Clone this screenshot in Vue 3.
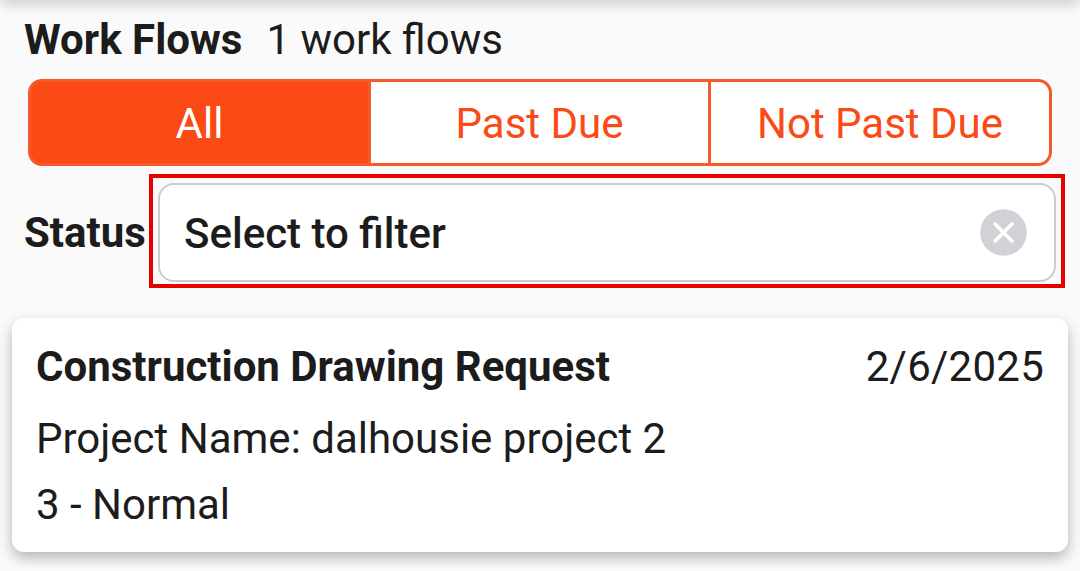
<script setup>
import { ref } from 'vue'

const tabs = ['All', 'Past Due', 'Not Past Due']
const activeTab = ref('All')
</script>

<template>
  <div class="page">
    <div class="top-shadow"></div>
    <div class="heading">
      <span class="heading-title">Work Flows</span>
      <span class="heading-count">1 work flows</span>
    </div>

    <div class="tabs">
      <button
        v-for="tab in tabs"
        :key="tab"
        type="button"
        class="tab"
        :class="{ active: tab === activeTab }"
        @click="activeTab = tab"
      >{{ tab }}</button>
    </div>

    <div class="filter-row">
      <span class="filter-label">Status</span>
      <div class="filter-box">
        <div class="filter-input">
          <span class="filter-text">Select to filter</span>
          <svg class="clear-icon" width="47" height="47" viewBox="0 0 47 47">
            <circle cx="23.5" cy="23.5" r="23.3" fill="#d1d1d6" />
            <path d="M15 15L32 32M32 15L15 32" stroke="#fff" stroke-width="3.6" stroke-linecap="round" />
          </svg>
        </div>
      </div>
    </div>

    <div class="card">
      <div class="card-top">
        <span class="card-title">Construction Drawing Request</span>
        <span class="card-date">2/6/2025</span>
      </div>
      <div class="card-project">Project Name: dalhousie project 2</div>
      <div class="card-priority">3 - Normal</div>
    </div>
  </div>
</template>

<style>
html,
body {
  margin: 0;
  background: #fafafa;
}
</style>

<style scoped>
.page {
  position: relative;
  width: 1080px;
  height: 571px;
  overflow: hidden;
  background: #fafafa;
  color: #1c1c1c;
  font-family: Roboto, "Liberation Sans", sans-serif;
  font-size: 42px;
  box-sizing: border-box;
  padding-top: 16px;
}

.top-shadow {
  position: absolute;
  top: -10px;
  left: 0;
  right: 0;
  height: 10px;
  box-shadow: 0 3px 14px rgba(0, 0, 0, 0.24);
}

.heading {
  display: flex;
  align-items: baseline;
  gap: 24px;
  padding-left: 24px;
  height: 48px;
  line-height: 48px;
}

.heading-title {
  font-weight: 700;
}

.tabs {
  display: grid;
  grid-template-columns: 343px 340px 341px;
  margin: 15px 28px 0 28px;
  height: 87px;
}

.tab {
  margin: 0;
  padding: 2px 0 0;
  background: #fff;
  color: #fb4a15;
  border: 3px solid #f55a2c;
  border-left-width: 0;
  font: inherit;
  cursor: pointer;
}

.tab:first-child {
  border-left-width: 3px;
  border-radius: 14px 0 0 14px;
}

.tab:last-child {
  border-radius: 0 14px 14px 0;
}

.tab.active {
  background: #fb4a15;
  color: #fff;
}

.filter-row {
  display: flex;
  align-items: center;
  margin-top: 8px;
  padding-left: 24px;
}

.filter-label {
  width: 125px;
  padding-top: 2px;
  font-weight: 700;
  white-space: nowrap;
}

.filter-box {
  width: 916px;
  height: 114px;
  box-sizing: border-box;
  padding: 5px;
  border: 4px solid #e60000;
}

.filter-input {
  display: flex;
  align-items: center;
  justify-content: space-between;
  height: 99px;
  box-sizing: border-box;
  padding: 0 27px 0 24px;
  background: #fff;
  border: 2px solid #cccccc;
  border-radius: 16px;
}

.filter-text {
  padding-top: 2px;
  font-weight: 500;
}

.clear-icon {
  display: block;
}

.card {
  margin: 30px 12px 0;
  height: 234px;
  box-sizing: border-box;
  padding: 25px 24px 0;
  background: #fff;
  border-radius: 12px;
  box-shadow: 0 6px 14px rgba(0, 0, 0, 0.28);
}

.card-top {
  display: flex;
  justify-content: space-between;
  align-items: baseline;
  line-height: 48px;
}

.card-title {
  font-weight: 700;
}

.card-date {
  letter-spacing: 0.25px;
}

.card-project {
  line-height: 48px;
  margin-top: 24px;
}

.card-priority {
  line-height: 48px;
  margin-top: 18px;
}
</style>
